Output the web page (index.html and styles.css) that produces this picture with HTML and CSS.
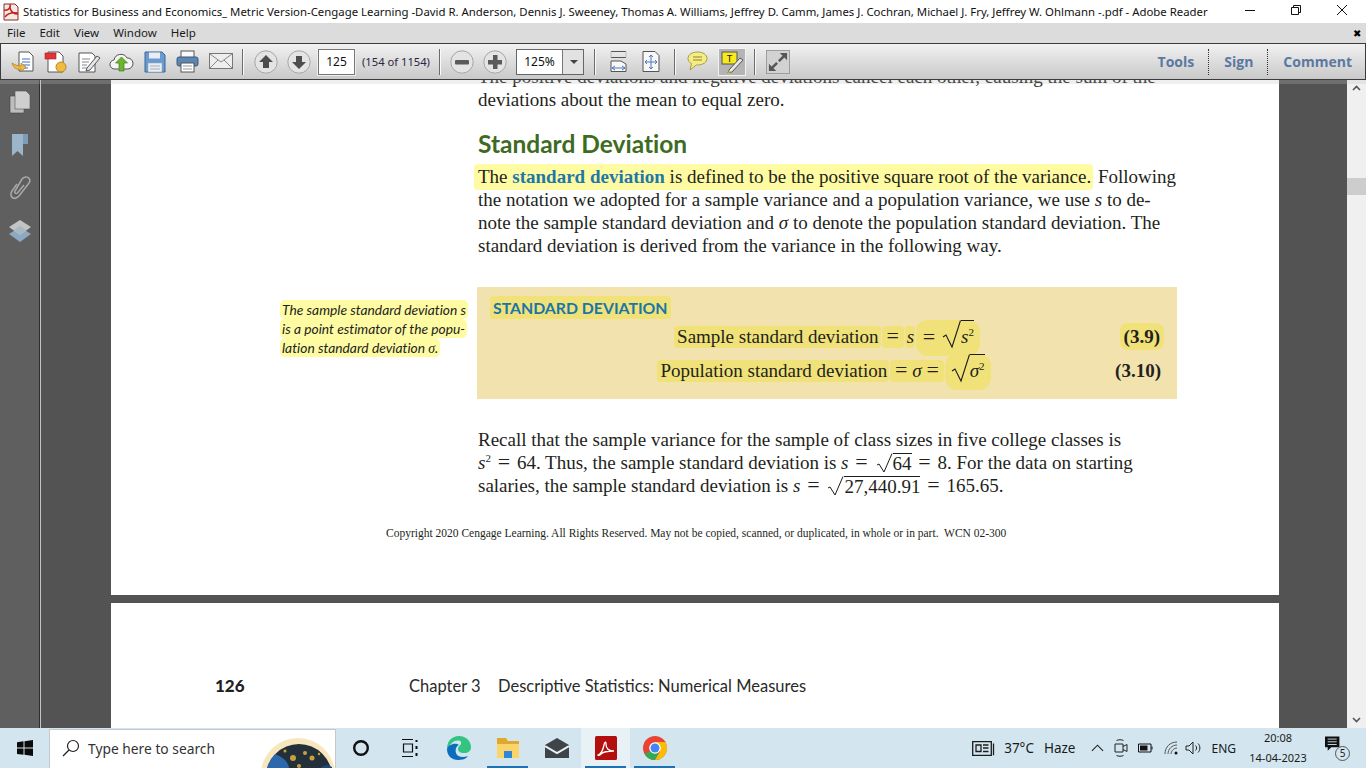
FILE: index.html
```html
<!DOCTYPE html>
<html lang="en">

<head>
    <meta charset="UTF-8">
    <meta name="viewport" content="width=device-width, initial-scale=1.0">
    <title>Adobe Reader</title>
    <link rel="stylesheet" href="styles.css">
</head>

<body>
    <header class="titlebar">
        <svg class="app-icon" width="18" height="18" viewBox="0 0 18 18">
            <path d="M2 1h11l3 3v13H2z" fill="#f3e9e6" stroke="#8c2a22" />
            <path d="M2 7c5 1 7-3 6-6M8 5c1 4 3 6 8 6M3 14c2-3 6-5 13-4" fill="none" stroke="#c9201a" stroke-width="1.5" />
        </svg>
        <span class="title-text">Statistics for Business and Economics_ Metric Version-Cengage Learning -David R. Anderson, Dennis J. Sweeney, Thomas A. Williams, Jeffrey D. Camm, James J. Cochran, Michael J. Fry, Jeffrey W. Ohlmann -.pdf - Adobe Reader</span>
        <div class="win-btns">
            <svg width="46" height="22" viewBox="0 0 46 22"><path d="M18 10.500h10" stroke="#111" /></svg>
            <svg width="46" height="22" viewBox="0 0 46 22"><path d="M18.500 7.500h7v7h-7zM20.500 7.500v-2h7v7h-2" fill="none" stroke="#111" /></svg>
            <svg width="46" height="22" viewBox="0 0 46 22"><path d="M18 5l10 10M28 5L18 15" fill="none" stroke="#111" /></svg>
        </div>
    </header>

    <nav class="menubar">
        <span>File</span>
        <span>Edit</span>
        <span>View</span>
        <span>Window</span>
        <span>Help</span>
        <span class="menu-close">&#10006;</span>
    </nav>

    <div class="toolbar">
        <div class="tool">
            <svg width="24" height="24" viewBox="0 0 24 24">
                <path d="M8 2h10l4 4v15H8z" fill="#fff" stroke="#555" />
                <path d="M11 9h8M11 12h8M11 15h8M11 18h6" stroke="#3b6fc4" />
                <path d="M1 13c1 5 5 7 9 6v3l5-5-5-4v3c-3 0-6-1-9-3z" fill="#f0b93f" stroke="#a87920" stroke-width=".7" />
            </svg>
        </div>
        <div class="tool">
            <svg width="24" height="24" viewBox="0 0 24 24">
                <path d="M4 2h11l4 4v16H4z" fill="#fff" stroke="#555" />
                <rect x="1" y="3" width="11" height="6" fill="#e2333a" stroke="#a02020" stroke-width=".6" />
                <circle cx="17" cy="17" r="5" fill="#f0bc3f" stroke="#b88a20" />
            </svg>
        </div>
        <div class="tool">
            <svg width="24" height="24" viewBox="0 0 24 24">
                <path d="M2 3h13l3 3v16H2z" fill="#fff" stroke="#555" />
                <path d="M5 9h8M5 12h7M5 15h5M5 18h8" stroke="#888" />
                <path d="M10 18l10-12 3 2-10 12-4 1z" fill="#dfe7ef" stroke="#555" />
            </svg>
        </div>
        <div class="tool">
            <svg width="25" height="22" viewBox="0 0 25 22">
                <path d="M6 18a4.500 4.500 0 0 1-1-9 7 7 0 0 1 13-2 5.500 5.500 0 0 1 1 11z" fill="#f4f4f4" stroke="#555" />
                <path d="M12.500 6l6 6h-3.500v8h-5v-8h-3.500z" fill="#6bb52f" stroke="#3f7d18" stroke-width=".7" />
            </svg>
        </div>
        <div class="tool">
            <svg width="22" height="22" viewBox="0 0 22 22">
                <path d="M1 1h17l3 3v17H1z" fill="#6a9ad2" stroke="#3d6594" />
                <rect x="5" y="1.500" width="11" height="6" fill="#e9eef4" />
                <rect x="4" y="12" width="14" height="9" fill="#e8edf2" stroke="#8aa" stroke-width=".5" />
                <path d="M6 15h10M6 18h10" stroke="#aab" />
            </svg>
        </div>
        <div class="tool">
            <svg width="23" height="23" viewBox="0 0 23 23">
                <rect x="5" y="1" width="13" height="8" fill="#fafafa" stroke="#555" />
                <rect x="1" y="7" width="21" height="9" rx="2" fill="#5c87b2" stroke="#3a5a7c" />
                <rect x="5" y="13" width="13" height="9" fill="#fff" stroke="#555" />
                <path d="M7 16h9M7 19h9" stroke="#999" />
            </svg>
        </div>
        <div class="tool">
            <svg width="24" height="18" viewBox="0 0 24 18">
                <rect x=".5" y=".5" width="23" height="15" fill="#eee" stroke="#777" />
                <path d="M1 1l11 8 11-8M1 15l8-8M23 15l-8-8" fill="none" stroke="#888" />
            </svg>
        </div>
        <i class="tool-sep"></i>
        <div class="tool">
            <svg width="24" height="24" viewBox="0 0 24 24">
                <circle cx="12" cy="12" r="11.200" fill="#e4e4e4" stroke="#a6a6a6" />
                <path d="M12 5l7 7h-4v6H9v-6H5z" fill="#4d4d4d" />
            </svg>
        </div>
        <div class="tool">
            <svg width="24" height="24" viewBox="0 0 24 24">
                <circle cx="12" cy="12" r="11.200" fill="#e4e4e4" stroke="#a6a6a6" />
                <path d="M12 19l-7-7h4V6h6v6h4z" fill="#4d4d4d" />
            </svg>
        </div>
        <div class="page-input">125</div>
        <span class="page-count">(154 of 1154)</span>
        <i class="tool-sep sep-count"></i>
        <div class="tool">
            <svg width="24" height="24" viewBox="0 0 24 24">
                <circle cx="12" cy="12" r="11.200" fill="#e4e4e4" stroke="#a6a6a6" />
                <rect x="5" y="10" width="14" height="4.500" rx="1" fill="#5a5a5a" />
            </svg>
        </div>
        <div class="tool">
            <svg width="24" height="24" viewBox="0 0 24 24">
                <circle cx="12" cy="12" r="11.200" fill="#e4e4e4" stroke="#a6a6a6" />
                <path d="M10 5h4.500v5H19v4.500h-4.500V19H10v-4.500H5V10h5z" fill="#5a5a5a" />
            </svg>
        </div>
        <div class="zoom-select">
            <span class="zoom-value">125%</span>
            <span class="zoom-arrow"></span>
        </div>
        <i class="tool-sep sep-zoom"></i>
        <div class="tool">
            <svg width="17" height="21" viewBox="0 0 17 21">
                <path d="M1 .5h15M1 6.500h15" fill="none" stroke="#555" />
                <path d="M1 .5v6M16 .5v6" fill="none" stroke="#bbb" />
                <path d="M1 10h10l5 3v7.500H1z" fill="#f7f7f7" stroke="#555" />
                <path d="M2 17h13M2 17l3-2M2 17l3 2M15 17l-3-2M15 17l-3 2" stroke="#4a78bd" fill="none" />
            </svg>
        </div>
        <div class="tool">
            <svg width="18" height="21" viewBox="0 0 18 21">
                <path d="M1 .5h12l4 4v16H1z" fill="#f7f7f7" stroke="#555" />
                <path d="M3 11h12M9 4v14M3 11l2-2M3 11l2 2M15 11l-2-2M15 11l-2 2M9 4L7 6M9 4l2 2M9 18l-2-2M9 18l2-2" stroke="#4a78bd" fill="none" />
            </svg>
        </div>
        <i class="tool-sep sep-fit"></i>
        <div class="tool tool-comment">
            <svg width="21" height="21" viewBox="0 0 21 21">
                <path d="M10.500 1C5 1 1 3.800 1 7.500c0 2.200 1.300 4 3.500 5.100L3 19l6.200-5h1.300C16 14 20 11.200 20 7.500S16 1 10.500 1z" fill="#f6ec86" stroke="#a79c3b" />
                <path d="M6 6h9M6 9h9" stroke="#8d8433" />
            </svg>
        </div>
        <div class="tool tool-active">
            <svg width="22" height="22" viewBox="0 0 22 22">
                <rect x="1" y="1" width="15" height="12" fill="#f7ea18" stroke="#555" />
                <text class="t-glyph" x="8.500" y="11">T</text>
                <path d="M8 19l11-12 3 2-11 12-4 1z" fill="#e7e7e7" stroke="#555" />
                <path d="M7 22l1-3 3 2z" fill="#d8c72d" />
            </svg>
        </div>
        <i class="tool-sep sep-active"></i>
        <div class="tool-expand">
            <svg width="20" height="20" viewBox="0 0 22 22">
                <path d="M13 1h8v8l-3-3-5 5-2-2 5-5zM9 21H1v-8l3 3 5-5 2 2-5 5z" fill="#565656" />
            </svg>
        </div>
        <div class="tool-links">
            <span class="tool-link">Tools</span>
            <span class="tool-link">Sign</span>
            <span class="tool-link">Comment</span>
        </div>
    </div>

    <main class="reader">
        <aside class="rail">
            <svg width="22" height="24" viewBox="0 0 22 24">
                <path d="M1 6h14v17H1z" fill="#bdbdbd" stroke="#444" stroke-width=".6" />
                <path d="M6 1h11l4 4v14H6z" fill="#cfcfcf" stroke="#555" stroke-width=".6" />
            </svg>
            <svg width="18" height="24" viewBox="0 0 18 24">
                <path d="M1 1h11v22l-5.500-5L1 23z" fill="#9db5ca" />
                <path d="M12 1h5v10h-5z" fill="#7c9cb8" />
            </svg>
            <svg width="22" height="24" viewBox="0 0 22 24">
                <path d="M8 8L3 15c-2 3-1 6 1 7s4 0 6-2l10-13c2-3 0-6-3-6-1.500 0-3 1-4 2L6 15c-1 2 1 3 2.500 2L15 9" fill="none" stroke="#a9a9a9" stroke-width="1.500" />
            </svg>
            <svg width="24" height="24" viewBox="0 0 24 24">
                <path d="M12 8l11 7-11 8L1 15z" fill="#8da9c1" />
                <path d="M12 1l11 7-11 8L1 8z" fill="#c4c4c4" />
                <path d="M12 7l6 4-6 5-6-5z" fill="#a7b8c4" />
            </svg>
        </aside>

        <div class="viewer">
            <article class="page page-one">
                <p class="body-text body-top">The positive deviations and negative deviations cancel each other, causing the sum of the<br>deviations about the mean to equal zero.</p>
                <h2 class="section-title">Standard Deviation</h2>
                <p class="body-text body-def"><span class="hl-line">The <b class="term">standard deviation</b> is defined to be the positive square root of the variance.</span> Following<br>the notation we adopted for a sample variance and a population variance, we use <i>s</i> to de-<br>note the sample standard deviation and <i>&sigma;</i> to denote the population standard deviation. The<br>standard deviation is derived from the variance in the following way.</p>

                <div class="def-row">
                    <p class="side-note">
                        <span class="hl-note">The sample standard deviation s</span><br>
                        <span class="hl-note">is a point estimator of the popu-</span><br>
                        <span class="hl-note">lation standard deviation <span class="serif-sigma">&sigma;</span>.</span>
                    </p>
                    <section class="def-box">
                        <h3 class="def-title"><span class="hl-box">STANDARD DEVIATION</span></h3>
                        <div class="eq-row">
                            <div class="eq eq-sample">
                                <span class="hl-eq hl-words">Sample standard deviation</span>
                                <span class="hl-eq"><span class="eq-sign eq-tight">=</span></span>
                                <span class="hl-eq hl-var"><i>s</i></span>
                                <span class="root-hl root-wide"><span class="eq-sign">=</span><svg class="radical" width="19" height="29" viewBox="0 0 19 29"><path d="M1 17l3-2 6 12L18.500 .5" fill="none" stroke="#1c1c1c" stroke-width="1.100" /></svg><span class="root-body"><i>s</i><sup>2</sup></span></span>
                            </div>
                            <b class="eq-num"><span class="hl-num">(3.9)</span></b>
                        </div>
                        <div class="eq-row">
                            <div class="eq">
                                <span class="hl-eq hl-words">Population standard deviation</span>
                                <span class="hl-eq"><span class="eq-sign eq-tight">=</span><i>&sigma;</i><span class="eq-sign eq-tight">=</span></span>
                                <span class="root-hl"><svg class="radical" width="19" height="29" viewBox="0 0 19 29"><path d="M1 17l3-2 6 12L18.500 .5" fill="none" stroke="#1c1c1c" stroke-width="1.100" /></svg><span class="root-body"><i>&sigma;</i><sup>2</sup></span></span>
                            </div>
                            <b class="eq-num">(3.10)</b>
                        </div>
                    </section>
                </div>

                <p class="body-text body-recall">Recall that the sample variance for the sample of class sizes in five college classes is<br><i>s</i><sup>2</sup><span class="eq-sign">=</span>64. Thus, the sample standard deviation is <i>s</i><span class="eq-sign">=</span><span class="inline-root"><svg width="18" height="20" viewBox="0 0 18 20"><path d="M2 12l2-1 5 8 8-18.500" fill="none" stroke="#1c1c1c" /></svg><span class="inline-body">64</span></span><span class="eq-sign">=</span>8. For the data on starting<br>salaries, the sample standard deviation is <i>s</i><span class="eq-sign">=</span><span class="inline-root"><svg width="18" height="20" viewBox="0 0 18 20"><path d="M2 12l2-1 5 8 8-18.500" fill="none" stroke="#1c1c1c" /></svg><span class="inline-body">27,440.91</span></span><span class="eq-sign">=</span>165.65.</p>
                <p class="copyright">Copyright 2020 Cengage Learning. All Rights Reserved. May not be copied, scanned, or duplicated, in whole or in part.&nbsp; WCN 02-300</p>
            </article>
            <article class="page page-two">
                <span class="folio">126</span>
                <span class="running-head">Chapter 3</span>
                <span class="running-title">Descriptive Statistics: Numerical Measures</span>
            </article>
        </div>

        <div class="scrollbar">
            <svg width="19" height="17" viewBox="0 0 19 17"><path d="M6 10l3.500-3.500L13 10" fill="none" stroke="#555" stroke-width="1.600" /></svg>
            <div class="scroll-track"><div class="scroll-thumb"></div></div>
            <svg width="19" height="17" viewBox="0 0 19 17"><path d="M6 7l3.500 3.500L13 7" fill="none" stroke="#555" stroke-width="1.600" /></svg>
        </div>
    </main>

    <footer class="taskbar">
        <div class="start">
            <svg width="16" height="16" viewBox="0 0 16 16"><path d="M0 2.200l6.500-.9v6.300H0zM7.500 1.200L16 0v7.600H7.500zM0 8.600h6.500v6.200L0 14zM7.500 8.600H16V16l-8.500-1.200z" fill="#0b0b0b" /></svg>
        </div>
        <div class="search">
            <svg width="18" height="18" viewBox="0 0 18 18"><circle cx="11" cy="7" r="5.500" fill="none" stroke="#222" stroke-width="1.200" /><path d="M7 11l-6 6" stroke="#222" stroke-width="1.200" /></svg>
            <span class="search-text">Type here to search</span>
            <svg class="search-art" width="76" height="39" viewBox="0 0 76 39">
                <circle cx="39" cy="45" r="37" fill="#f8e6bd" />
                <circle cx="40" cy="47" r="33" fill="#23303a" />
                <path d="M7 47a33 33 0 0 1 9-23c8 3 14 8 14 15l-1 8z" fill="#2e68ac" />
                <path d="M60 40c3-5 8-6 13-3v10H58z" fill="#1d4a7e" />
                <circle cx="34" cy="28" r="3" fill="#c9a13c" />
                <circle cx="46" cy="23" r="2" fill="#c9a13c" />
                <circle cx="53" cy="28" r="2.500" fill="#c9a13c" />
                <circle cx="26" cy="21" r="1.500" fill="#c9a13c" />
                <circle cx="40" cy="36" r="2" fill="#c9a13c" />
                <circle cx="60" cy="24" r="1.200" fill="#c9a13c" />
            </svg>
        </div>
        <div class="task-app">
            <svg width="18" height="18" viewBox="0 0 18 18"><circle cx="9" cy="9" r="6.800" fill="none" stroke="#111" stroke-width="2.400" /></svg>
        </div>
        <div class="task-app">
            <svg width="18" height="18" viewBox="0 0 18 18"><path d="M1 .5h11M1 17.500h11M2.500 5h9v8h-9z" fill="none" stroke="#111" stroke-width="1.200" /><path d="M15.500 1v2M15.500 7v3M15.500 14v3" stroke="#111" stroke-width="2" /></svg>
        </div>
        <div class="task-app">
            <svg width="26" height="26" viewBox="0 0 26 26">
                <path d="M13 1c7 0 12 5 12 11 0 4-3 6-7 6-3 0-6-1-6-4 0-3 4-4 3-7-1-2-6-2-9 1C3 11 1 14 1 14 1 6 6 1 13 1z" fill="#33c481" />
                <path d="M1 14c0 7 5 11 11 11 4 0 8-1 10-4-5 2-11 1-12-3-1-3 0-7 3-8-4-3-11 0-12 4z" fill="#0c6cbd" />
            </svg>
        </div>
        <div class="task-app app-open">
            <svg width="24" height="22" viewBox="0 0 24 22">
                <path d="M1 1h9l2 3h11v17H1z" fill="#e0a92e" />
                <path d="M1 7h22v14H1z" fill="#fbd56a" />
                <path d="M8 14h8v7H8z" fill="#2f87d6" />
            </svg>
        </div>
        <div class="task-app">
            <svg width="24" height="20" viewBox="0 0 24 20">
                <path d="M0 7L12 0l12 7v13H0z" fill="#3f4448" />
                <path d="M0 8l12 7 12-7" fill="none" stroke="#e8f1f6" stroke-width="2" />
            </svg>
        </div>
        <div class="task-app app-active">
            <svg width="22" height="24" viewBox="0 0 22 24">
                <rect width="22" height="24" rx="1.500" fill="#b40f0f" />
                <path d="M3 19c3-1 5-5 6-10 .5-3 2-4 2-1 0 5 3 7 8 7-5 0-11 1-13 3-1 1-2 2-3 1z" fill="none" stroke="#fff" stroke-width="1.300" />
            </svg>
        </div>
        <div class="task-app app-open">
            <svg width="26" height="26" viewBox="0 0 26 26">
                <circle cx="13" cy="13" r="12" fill="#ea4335" />
                <path d="M13 13L2.600 19A12 12 0 0 0 13 25c2 0 4-.5 5.500-1.500z" fill="#34a853" />
                <path d="M13 7h10.400A12 12 0 0 1 13 25l5-8.500z" fill="#fbbc05" />
                <circle cx="13" cy="13" r="5.800" fill="#fff" />
                <circle cx="13" cy="13" r="4.500" fill="#4285f4" />
            </svg>
        </div>

        <div class="tray">
            <svg width="24" height="15" viewBox="0 0 24 15"><path d="M.7.700h18.600v13.600H.7zM4 4h5v6.500H4zM11 4h5.500M11 7h5.500M11 10.500h5.500M21.500 2.500v11.800" fill="none" stroke="#1c1c1c" stroke-width="1.300" /></svg>
            <span class="weather">37°C</span>
            <span class="haze">Haze</span>
            <svg class="tray-chevron" width="13" height="8" viewBox="0 0 14 8"><path d="M1 7l6-6 6 6" fill="none" stroke="#222" stroke-width="1.200" /></svg>
            <svg class="tray-meet" width="14" height="20" viewBox="0 0 14 20"><path d="M1 6h8v8H1zM9 8.500l4-2v7l-4-2M2.500 2.500c2-1 5-1 7 0M2.500 17.500c2 1 5 1 7 0" fill="none" stroke="#222" /></svg>
            <svg class="tray-battery" width="15" height="10" viewBox="0 0 15 10"><path d="M.5 1h12.500v8H.5zM14 3.500v3" fill="none" stroke="#111" /><rect x="2" y="2.500" width="7.500" height="5" fill="#111" /></svg>
            <svg class="tray-wifi" width="15" height="14" viewBox="0 0 15 14"><path d="M1 13C1 6 6 1 13 1M4 13c0-5 4-9 9-9M7 13c0-3 3-6 6-6" fill="none" stroke="#555" /><circle cx="12" cy="12" r="1.500" fill="#111" /></svg>
            <svg class="tray-sound" width="17" height="14" viewBox="0 0 17 14"><path d="M1 5h3l4-4v12L4 9H1zM10.500 4.500c1.500 1.500 1.500 3.500 0 5M13 2.500c2.500 2.500 2.500 6.500 0 9" fill="none" stroke="#222" /></svg>
            <span class="tray-lang">ENG</span>
            <div class="clock"><span>20:08</span><span>14-04-2023</span></div>
            <div class="notify">
                <svg width="18" height="17" viewBox="0 0 20 18"><path d="M0 0h16v12H7l-4 4v-4H0z" fill="#111" /><path d="M3 3h10M3 6h10M3 9h10" stroke="#d3e6ef" /></svg>
                <span class="notify-badge">5</span>
            </div>
        </div>
    </footer>
</body>

</html>
```

FILE: styles.css
```css
* {
    box-sizing: border-box;
}

body {
    margin: 0;
    width: 1366px;
    height: 768px;
    overflow: hidden;
    display: flex;
    flex-direction: column;
    font-family: "Open Sans", "Noto Sans", sans-serif;
    background-color: #535353;
}

svg {
    display: block;
    flex: none;
}

/* title bar */

.titlebar {
    height: 23px;
    background-color: #ffffff;
    display: flex;
    align-items: center;
    padding-left: 2px;
    position: relative;
}

.title-text {
    margin-left: 3px;
    font-family: "Noto Sans", sans-serif;
    font-size: 11.380px;
    color: #111;
    white-space: nowrap;
}

.win-btns {
    position: absolute;
    right: 0;
    top: 0;
    display: flex;
    padding-right: 1px;
}

/* menu */

.menubar {
    height: 20px;
    background-color: #dcdcdc;
    display: flex;
    align-items: center;
    gap: 14px;
    padding-left: 7px;
    padding-bottom: 1px;
    font-family: "Noto Sans", sans-serif;
    font-size: 11.500px;
    color: #1a1a1a;
}

.menu-close {
    margin-left: auto;
    margin-right: 5px;
    font-size: 10px;
    color: #000;
}

/* toolbar */

.toolbar {
    height: 37px;
    position: relative;
    z-index: 2;
    display: flex;
    align-items: center;
    padding-left: 5px;
    background: linear-gradient(#f1f1f1, #c9c9c9);
    border: 1px solid #3c3c3c;
    box-shadow: 0 4px 0 rgba(190, 190, 190, 0.25);
}

.tool {
    width: 33px;
    height: 35px;
    display: flex;
    align-items: center;
    justify-content: center;
}

.tool-sep {
    width: 1px;
    height: 26px;
    margin: 0 6px 0 5px;
    background-color: #6b6b6b;
    box-shadow: 1px 0 0 #fafafa;
}

.page-input {
    width: 37px;
    height: 26px;
    margin-left: 3px;
    background-color: #fff;
    border: 1px solid #777;
    outline: 1px solid #eee;
    font-size: 12px;
    line-height: 24px;
    text-align: center;
    color: #111;
    font-family: "Noto Sans", sans-serif;
}

.page-count {
    margin-left: 7px;
    font-family: "Noto Sans", sans-serif;
    font-size: 11.200px;
    color: #2a2440;
    white-space: nowrap;
}

.sep-count {
    margin: 0 6px 0 9px;
}

.zoom-select {
    width: 68px;
    height: 26px;
    margin-left: 4px;
    display: flex;
    border: 1px solid #666;
    background-color: #fff;
}

.zoom-value {
    width: 45px;
    font-family: "Noto Sans", sans-serif;
    font-size: 12px;
    line-height: 24px;
    text-align: center;
    color: #111;
}

.zoom-arrow {
    flex: 1;
    position: relative;
    border-left: 1px solid #777;
    background-color: #e2e2e2;
}

.zoom-arrow::after {
    content: "";
    position: absolute;
    left: 7px;
    top: 10px;
    border-left: 4px solid transparent;
    border-right: 4px solid transparent;
    border-top: 4px solid #444;
}

.sep-zoom {
    margin: 0 7px 0 10px;
}

.sep-fit {
    margin: 0 8px 0 6px;
}

.tool-comment {
    width: 30px;
}

.tool-active {
    width: 28px;
    height: 28px;
    margin-left: 5px;
    background-color: #b4b4b4;
    border: 1px solid #f2f2f2;
}

.t-glyph {
    font-family: "Liberation Mono", monospace;
    font-size: 10px;
    text-anchor: middle;
    fill: #222;
}

.sep-active {
    margin: 0 0 0 8px;
}

.tool-expand {
    width: 24px;
    height: 24px;
    margin-left: 11px;
    padding: 1px;
    border: 1px solid #9d9d9d;
    background-color: #d2d2d2;
}

.tool-links {
    margin-left: auto;
    display: flex;
    align-items: center;
    height: 26px;
    margin-right: 13px;
}

.tool-link {
    font-family: "Open Sans", sans-serif;
    font-weight: 700;
    font-size: 14px;
    line-height: 26px;
    color: #5a79a0;
    padding: 0 14px 0 15px;
    border-left: 1px dotted #333;
}

.tool-link:first-child {
    border-left: 0;
}

.tool-link:last-child {
    padding-right: 0;
}

/* main area */

.reader {
    height: 648px;
    display: flex;
    overflow: hidden;
}

.rail {
    width: 41px;
    background-color: #5f5f5f;
    border-right: 1px solid #c4c4c4;
    display: flex;
    flex-direction: column;
    align-items: center;
    gap: 19px;
    padding-top: 10px;
    box-shadow: inset -1px 0 0 #2e2e2e;
}

.viewer {
    width: 1306px;
    padding-left: 70px;
}

.page {
    width: 1168px;
    background-color: #ffffff;
    color: #231f20;
}

.page-one {
    height: 530px;
    margin-top: -15px;
    padding-left: 367px;
    font-family: "Liberation Serif", serif;
}

.body-text {
    margin: 0;
    font-size: 19px;
    line-height: 23px;
    white-space: nowrap;
}

.body-text sup {
    font-size: 11px;
    line-height: 0;
}

.section-title {
    margin: 18px 0 6px;
    font-family: "Lato", sans-serif;
    font-variant-ligatures: none;
    font-weight: 700;
    font-size: 24.500px;
    line-height: 30px;
    color: #3e6b22;
}

.hl-line {
    background-color: #fefba3;
    border-radius: 4px;
    padding: 2px 2px 3px 4px;
    margin-left: -4px;
}

.term {
    color: #1f77a5;
}

.eq-sign {
    display: inline-block;
    width: 26px;
    text-align: center;
    font-size: 22px;
    line-height: 0;
}

.eq-tight {
    width: 22px;
}

/* definition block */

.def-row {
    display: flex;
    margin: 30px 0 0 -196px;
}

.side-note {
    width: 195px;
    margin: 13px 0 0 -2px;
    font-family: "Lato", sans-serif;
    font-variant-ligatures: none;
    font-style: italic;
    font-size: 13.800px;
    line-height: 19px;
    white-space: nowrap;
    flex: none;
}

.hl-note {
    background-color: #fefba3;
    border-radius: 5px;
    padding: 1px 2px;
}

.serif-sigma {
    font-family: "Liberation Serif", serif;
}

.def-box {
    width: 700px;
    height: 112px;
    margin-left: 2px;
    background-color: #f2e2ae;
    padding: 12px 16px 0 13px;
}

.def-title {
    margin: 0 0 3px;
    font-family: "Lato", sans-serif;
    font-weight: 700;
    font-size: 15.800px;
    line-height: 18px;
    color: #1a75a8;
}

.hl-box {
    background-color: #f0e278;
    border-radius: 4px;
    padding: 2px 3px;
}

.eq-row {
    position: relative;
    height: 34px;
    display: flex;
    justify-content: center;
    align-items: center;
    font-size: 19px;
    white-space: nowrap;
}

.eq {
    display: flex;
    align-items: center;
    margin-left: -3px;
}

.eq-sample {
    margin-left: 3px;
}

.eq-num {
    position: absolute;
    right: 0;
    font-size: 19px;
}

.hl-num {
    background-color: #f0e278;
    border-radius: 8px;
    padding: 3px 4px;
    margin-right: -3px;
}

.hl-eq {
    background-color: #f0e278;
    border-radius: 4px;
    height: 22px;
    line-height: 22px;
    margin-right: 1px;
}

.hl-words {
    padding-left: 3px;
    padding-right: 2px;
}

.hl-var {
    padding: 0 1px 0 2px;
}

.root-hl {
    display: flex;
    align-items: flex-start;
    background-color: #f0e278;
    border-radius: 12px;
    padding: 0 6px;
    height: 36px;
    margin-top: 2px;
}

.root-wide {
    padding-left: 0;
}

.root-wide .eq-sign {
    line-height: 34px;
}

.root-body {
    border-top: 1px solid #1c1c1c;
    height: 28px;
    line-height: 32px;
}

.root-body sup {
    font-size: 11px;
    line-height: 0;
}

.body-recall {
    margin-top: 29px;
}

.inline-root {
    display: inline-flex;
    align-items: flex-end;
    vertical-align: -4px;
    height: 20px;
}

.inline-body {
    border-top: 1px solid #1c1c1c;
    line-height: 19px;
}

.copyright {
    margin: 29px 0 0 -92px;
    font-size: 11.500px;
    line-height: 14px;
    white-space: nowrap;
}

/* second page */

.page-two {
    height: 125px;
    margin-top: 8px;
    padding: 73px 0 0 104px;
    display: flex;
    align-items: flex-start;
    font-family: "Lato", sans-serif;
    line-height: 20px;
}

.folio {
    width: 194px;
    font-weight: 900;
    font-size: 17px;
}

.running-head {
    width: 89px;
    font-size: 16.500px;
    color: #2a2a2a;
}

.running-title {
    font-size: 16.500px;
    color: #2a2a2a;
}

/* scrollbar */

.scrollbar {
    width: 19px;
    background-color: #f0f0f0;
    display: flex;
    flex-direction: column;
}

.scroll-track {
    flex: 1;
    padding-top: 81px;
}

.scroll-thumb {
    height: 17px;
    background-color: #cdcdcd;
}

/* taskbar */

.taskbar {
    height: 40px;
    display: flex;
    align-items: stretch;
    background-color: #d3e6ef;
    color: #1a1a1a;
    font-family: "Noto Sans", sans-serif;
}

.start {
    width: 49px;
    display: flex;
    align-items: center;
    justify-content: center;
}

.search {
    width: 287px;
    margin-top: 1px;
    background-color: #ffffff;
    border: 1px solid #c8c8c8;
    border-bottom: 0;
    display: flex;
    align-items: center;
    padding-left: 12px;
    padding-bottom: 2px;
    position: relative;
    overflow: hidden;
}

.search-text {
    margin-left: 8px;
    font-size: 13.800px;
    color: #333;
}

.search-art {
    position: absolute;
    right: 0;
    top: 0;
}

.task-app {
    width: 49px;
    display: flex;
    align-items: center;
    justify-content: center;
    position: relative;
}

.app-open::after,
.app-active::after {
    content: "";
    position: absolute;
    left: 4px;
    right: 4px;
    bottom: 0;
    height: 2px;
    background-color: #1a73b8;
}

.app-active {
    background-color: #e8f1f6;
}

.tray {
    margin-left: auto;
    display: flex;
    align-items: center;
    padding-right: 16px;
    font-size: 13.500px;
}

.weather {
    margin-left: 8px;
    white-space: nowrap;
}

.haze {
    margin-left: 10px;
}

.tray-chevron {
    margin-left: 16px;
}

.tray-meet {
    margin-left: 10px;
}

.tray-battery {
    margin-left: 10px;
}

.tray-wifi {
    margin-left: 11px;
}

.tray-sound {
    margin-left: 6px;
}

.tray-lang {
    margin-left: 9px;
    font-size: 12px;
}

.clock {
    width: 72px;
    margin-left: 6px;
    display: flex;
    flex-direction: column;
    align-items: center;
    gap: 4px;
    font-size: 11px;
    line-height: 16px;
}

.notify {
    position: relative;
    margin-left: 11px;
    width: 25px;
    height: 26px;
    padding-top: 1px;
}

.notify-badge {
    position: absolute;
    right: 0;
    bottom: 0;
    width: 15px;
    height: 15px;
    border: 1px solid #555;
    border-radius: 50%;
    background-color: #d3e6ef;
    font-size: 10px;
    line-height: 13px;
    text-align: center;
}
```
